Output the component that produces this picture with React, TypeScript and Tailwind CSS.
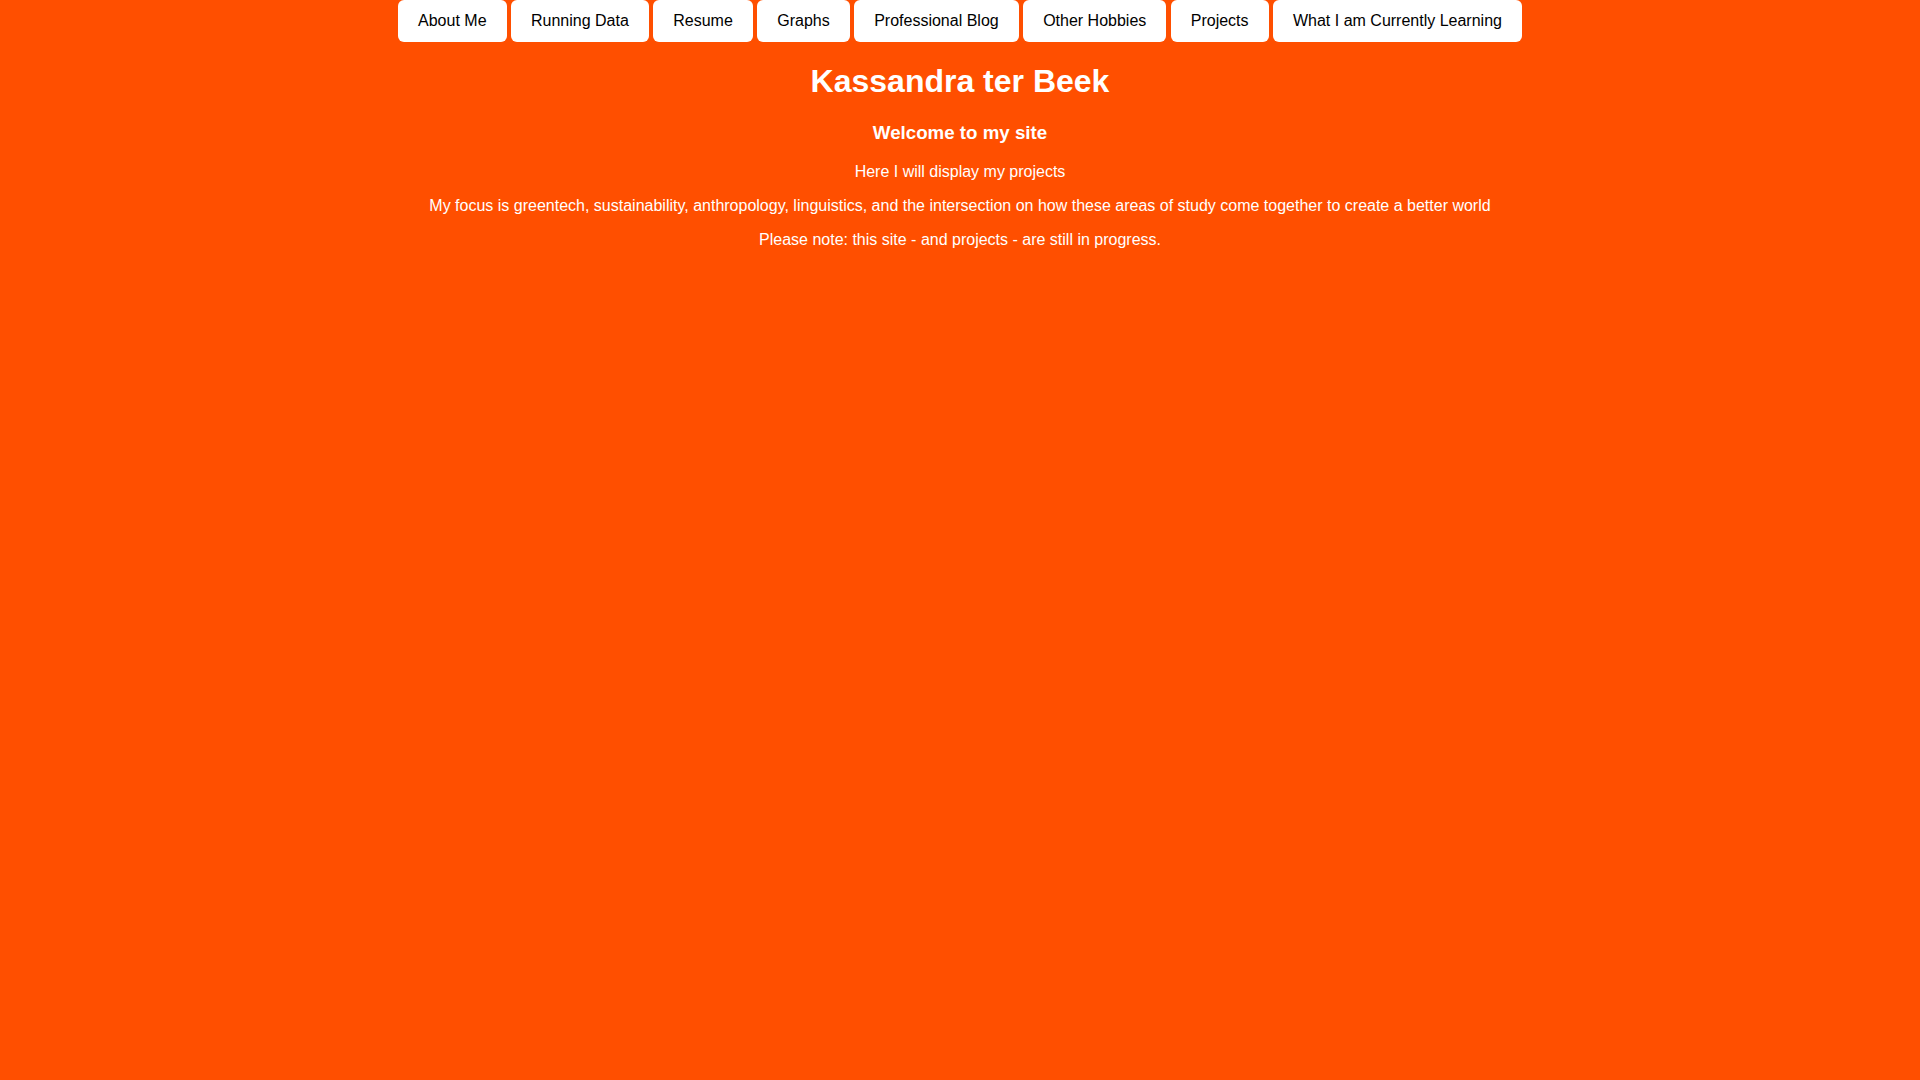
const links = [
  "About Me",
  "Running Data",
  "Resume",
  "Graphs",
  "Professional Blog",
  "Other Hobbies",
  "Projects",
  "What I am Currently Learning",
];

export default function App() {
  return (
    <div className="min-h-screen bg-[#ff4f00] text-white text-center font-['Liberation_Sans',Arial,sans-serif]">
      <nav className="flex justify-center gap-[4.45px]">
        {links.map((label) => (
          <button
            key={label}
            className="bg-white text-black text-[16px] leading-[18px] px-5 py-3 rounded-md"
          >
            {label}
          </button>
        ))}
      </nav>

      <h1 className="mt-[21px] text-[32px] leading-[37px] font-bold">Kassandra ter Beek</h1>
      <h3 className="mt-[22px] text-[18.72px] leading-[22px] font-bold">Welcome to my site</h3>

      <p className="mt-[19px] text-[16px] leading-[18px]">Here I will display my projects</p>
      <p className="mt-4 text-[16px] leading-[18px]">
        My focus is greentech, sustainability, anthropology, linguistics, and the intersection on how these areas of study come together to create a better world
      </p>
      <p className="mt-4 text-[16px] leading-[18px]">
        Please note: this site - and projects - are still in progress.
      </p>
    </div>
  );
}
